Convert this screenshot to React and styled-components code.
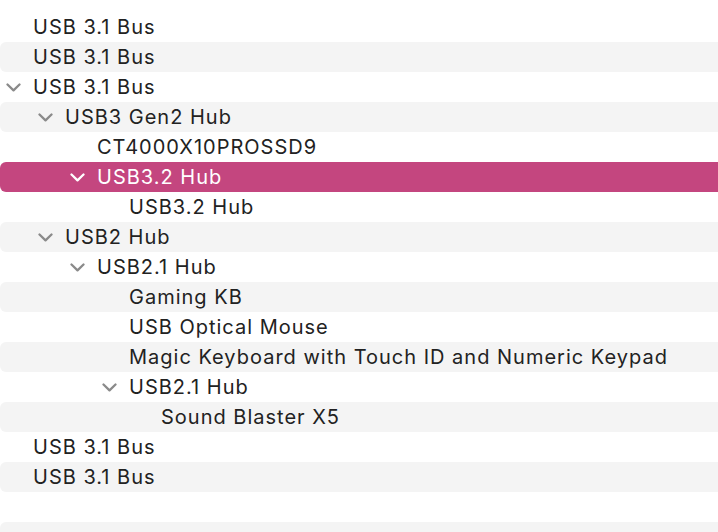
import React from "react";
import styled, { createGlobalStyle } from "styled-components";

const GlobalStyle = createGlobalStyle`
  body {
    margin: 0;
    background: #fff;
    font-family: Inter, "Noto Sans", "Liberation Sans", sans-serif;
  }
`;

const rows = [
  { label: "USB 3.1 Bus", level: 0 },
  { label: "USB 3.1 Bus", level: 0 },
  { label: "USB 3.1 Bus", level: 0, open: true },
  { label: "USB3 Gen2 Hub", level: 1, open: true },
  { label: "CT4000X10PROSSD9", level: 2 },
  { label: "USB3.2 Hub", level: 2, open: true, selected: true },
  { label: "USB3.2 Hub", level: 3 },
  { label: "USB2 Hub", level: 1, open: true },
  { label: "USB2.1 Hub", level: 2, open: true },
  { label: "Gaming KB", level: 3 },
  { label: "USB Optical Mouse", level: 3 },
  { label: "Magic Keyboard with Touch ID and Numeric Keypad", level: 3 },
  { label: "USB2.1 Hub", level: 3, open: true },
  { label: "Sound Blaster X5", level: 4 },
  { label: "USB 3.1 Bus", level: 0 },
  { label: "USB 3.1 Bus", level: 0 },
  { label: "", level: 0 },
  { label: "", level: 0 },
];

const Chevron = ({ selected }) => (
  <svg width="15" height="9" viewBox="0 0 15 9">
    <path
      d="M1.5 1.5 L7.5 7.3 L13.5 1.5"
      fill="none"
      stroke={selected ? "#fff" : "#8a8a8a"}
      strokeWidth="2.3"
      strokeLinecap="round"
      strokeLinejoin="round"
    />
  </svg>
);

const App = () => {
  return (
    <>
      <GlobalStyle />
      <Outline>
        {rows.map((row, i) => (
          <Row key={i} $striped={i % 2 === 1} $selected={row.selected} $level={row.level}>
            <Disclosure>{row.open && <Chevron selected={row.selected} />}</Disclosure>
            <Label $selected={row.selected}>{row.label}</Label>
          </Row>
        ))}
      </Outline>
    </>
  );
};

export default App;

const Outline = styled.div`
  padding-top: 12px;
  height: 520px;
  overflow: hidden;
`;

const Row = styled.div`
  display: flex;
  align-items: center;
  height: 30px;
  padding-left: ${(props) => 6 + props.$level * 32}px;
  border-radius: 6px 0 0 6px;
  background: ${(props) =>
    props.$selected ? "#c4467f" : props.$striped ? "#f4f4f4" : "#fff"};
`;

const Disclosure = styled.span`
  width: 15px;
  margin-right: 12px;
  display: flex;
  align-items: center;
  justify-content: center;
  padding-top: 1px;
`;

const Label = styled.span`
  font-size: 20px;
  line-height: 30px;
  margin-top: -1px;
  color: ${(props) => (props.$selected ? "#fff" : "#222")};
  white-space: nowrap;
  letter-spacing: 1px;
`;
